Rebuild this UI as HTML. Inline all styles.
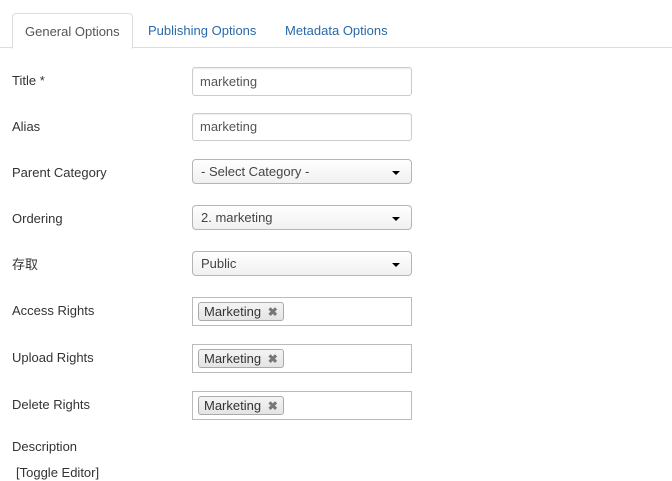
<!DOCTYPE html><html><head><meta charset="utf-8"><style>
body{margin:0;width:672px;height:475px;overflow:hidden;background:#fff;font-family:"Liberation Sans","Noto Sans CJK SC",sans-serif;font-size:13px;color:#333;position:relative}
.a{position:absolute;line-height:16px}
.tabline{left:0;top:47px;width:672px;height:1px;background:#ddd}
.tab{top:13px;height:35px;line-height:35px;padding:0 12px;color:#2a69a8}
.act{left:12px;width:95px;border:1px solid #ddd;border-bottom:1px solid #fff;border-radius:4px 4px 0 0;background:#fff;color:#555;height:34px}
.lbl{left:12px}
.inp{left:192px;width:220px;height:27px;border:1px solid #ccc;border-radius:3px;box-sizing:border-box;line-height:25px;padding-left:7px;color:#555;box-shadow:inset 0 1px 1px rgba(0,0,0,.075)}
.sel{left:192px;width:220px;height:25px;border:1px solid #b5b5b5;border-radius:4px;box-sizing:border-box;line-height:24px;padding-left:8px;color:#444;background:linear-gradient(#fff,#f0f0f0)}
.sel:after{content:"";position:absolute;right:11px;top:11px;border:4px solid transparent;border-top:4px solid #000;border-bottom:0}
.tags{left:192px;width:220px;height:29px;border:1px solid #bbb;box-sizing:border-box}
.tag{position:absolute;left:5px;top:4px;height:19px;line-height:18px;padding:0 5px;border:1px solid #aaa;border-radius:3px;background:linear-gradient(#f4f4f4,#e4e4e4);color:#333;box-sizing:border-box}
.tag b{color:#777;font-size:12px;margin-left:3px}
</style></head><body>
<div class="a tabline"></div>
<div class="a tab act">General Options</div>
<div class="a tab" style="left:136px">Publishing Options</div>
<div class="a tab" style="left:273px">Metadata Options</div>

<div class="a lbl" style="top:73px">Title *</div>
<div class="a inp" style="top:67px;height:29px;line-height:27px">marketing</div>
<div class="a lbl" style="top:119px">Alias</div>
<div class="a inp" style="top:113px;height:28px;line-height:26px">marketing</div>
<div class="a lbl" style="top:165px">Parent Category</div>
<div class="a sel" style="top:159px">- Select Category -</div>
<div class="a lbl" style="top:211px">Ordering</div>
<div class="a sel" style="top:205px">2. marketing</div>
<div class="a lbl" style="top:257px;line-height:16px">存取</div>
<div class="a sel" style="top:251px">Public</div>
<div class="a lbl" style="top:303px">Access Rights</div>
<div class="a tags" style="top:297px"><span class="tag">Marketing <b>✖</b></span></div>
<div class="a lbl" style="top:350px">Upload Rights</div>
<div class="a tags" style="top:344px"><span class="tag">Marketing <b>✖</b></span></div>
<div class="a lbl" style="top:397px">Delete Rights</div>
<div class="a tags" style="top:391px"><span class="tag">Marketing <b>✖</b></span></div>
<div class="a lbl" style="top:439px">Description</div>
<div class="a" style="left:16px;top:465px">[Toggle Editor]</div>
</body></html>
